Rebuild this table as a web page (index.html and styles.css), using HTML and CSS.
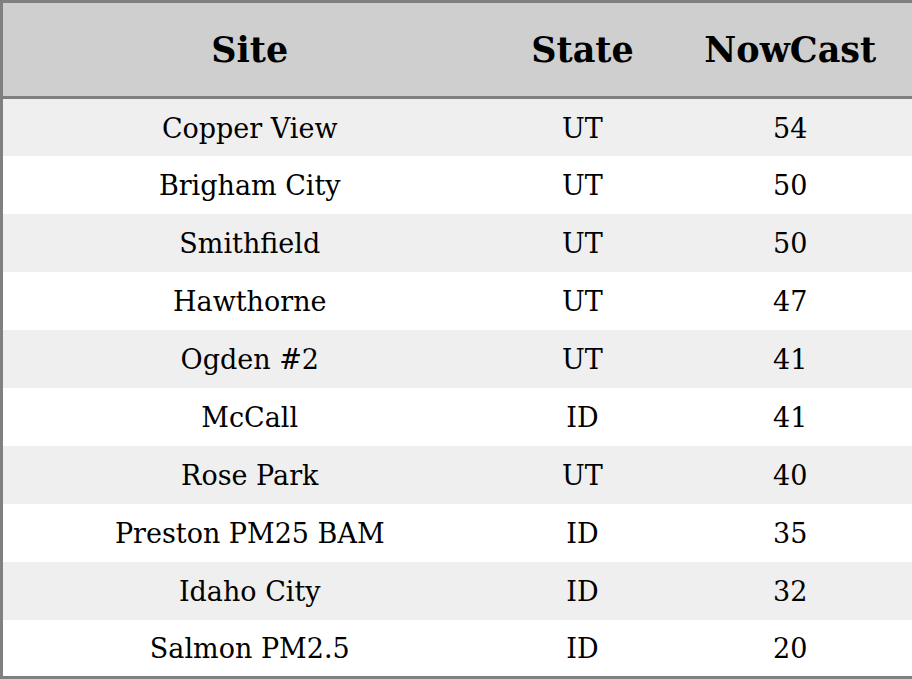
FILE: index.html
```html
<!DOCTYPE html>
<html>
<head>
<meta charset="utf-8">
<link rel="stylesheet" href="styles.css">
</head>
<body>
<table class="aq">
  <colgroup>
    <col class="c-site">
    <col class="c-state">
    <col class="c-now">
  </colgroup>
  <thead>
    <tr><th>Site</th><th>State</th><th>NowCast</th></tr>
  </thead>
  <tbody>
    <tr><td>Copper View</td><td>UT</td><td>54</td></tr>
    <tr><td>Brigham City</td><td>UT</td><td>50</td></tr>
    <tr><td>Smithfield</td><td>UT</td><td>50</td></tr>
    <tr><td>Hawthorne</td><td>UT</td><td>47</td></tr>
    <tr><td>Ogden #2</td><td>UT</td><td>41</td></tr>
    <tr><td>McCall</td><td>ID</td><td>41</td></tr>
    <tr><td>Rose Park</td><td>UT</td><td>40</td></tr>
    <tr><td>Preston PM25 BAM</td><td>ID</td><td>35</td></tr>
    <tr><td>Idaho City</td><td>ID</td><td>32</td></tr>
    <tr><td>Salmon PM2.5</td><td>ID</td><td>20</td></tr>
  </tbody>
</table>
</body>
</html>
```

FILE: styles.css
```css
html, body {
  margin: 0;
  padding: 0;
  background: #ffffff;
}
.aq {
  width: 912px;
  height: 679px;
  border-collapse: collapse;
  border: 3px solid #808080;
  table-layout: fixed;
  font-family: "DejaVu Serif", serif;
  color: #000;
}
.c-site { width: 495px; }
.c-state { width: 172px; }
.c-now { width: 245px; }
.aq th {
  background: #cfcfcf;
  font-size: 35px;
  font-weight: bold;
  height: 93px;
  padding: 0;
  text-align: center;
  vertical-align: middle;
  border-bottom: 3px solid #808080;
}
.aq td {
  font-size: 27px;
  height: 57.7px;
  padding: 2px 0 0 0;
  box-sizing: border-box;
  text-align: center;
  vertical-align: middle;
}
.aq tbody tr:nth-child(odd) td { background: #efefef; }
.aq tbody tr:nth-child(even) td { background: #ffffff; }
```
